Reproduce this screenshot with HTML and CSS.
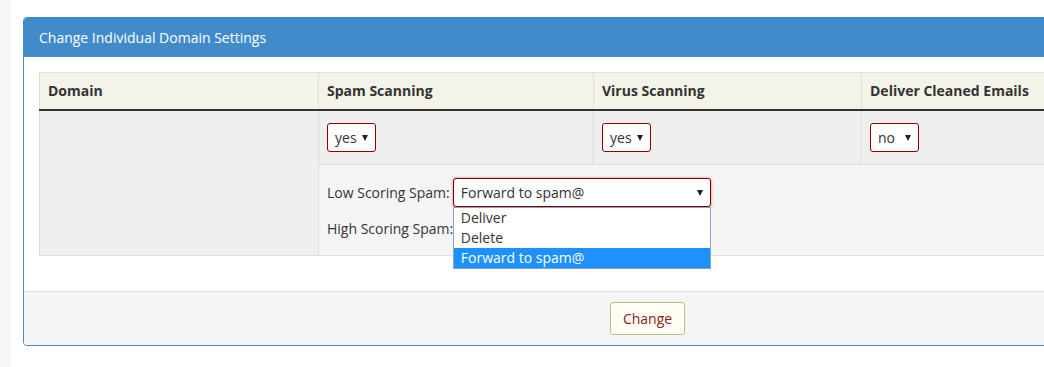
FILE: index.html
```html
<!DOCTYPE html>
<html>
<head>
<meta charset="utf-8">
<link rel="stylesheet" href="styles.css">
</head>
<body>
<div class="page">
  <aside class="rail"></aside>
  <main class="main">
    <section class="panel">
      <div class="panel-heading">Change Individual Domain Settings</div>
      <div class="panel-body">
        <table class="grid">
          <colgroup>
            <col class="c-domain"><col class="c-spam"><col class="c-virus"><col class="c-deliver">
          </colgroup>
          <thead>
            <tr>
              <th>Domain</th>
              <th>Spam Scanning</th>
              <th>Virus Scanning</th>
              <th>Deliver Cleaned Emails</th>
            </tr>
          </thead>
          <tbody>
            <tr class="row-main">
              <td class="domain" rowspan="2"></td>
              <td><div class="sel sel-small">yes<span class="caret"></span></div></td>
              <td><div class="sel sel-small">yes<span class="caret"></span></div></td>
              <td><div class="sel sel-small">no<span class="caret"></span></div></td>
            </tr>
            <tr class="row-sub">
              <td colspan="3">
                <div class="opt-line">
                  <span class="lbl">Low Scoring Spam:</span>
                  <div class="sel sel-low is-open">Forward to spam@<span class="caret"></span>
                    <ul class="dropdown">
                      <li>Deliver</li>
                      <li>Delete</li>
                      <li class="active">Forward to spam@</li>
                    </ul>
                  </div>
                </div>
                <div class="opt-line">
                  <span class="lbl">High Scoring Spam:</span>
                  <div class="sel sel-high">Delete<span class="caret"></span></div>
                </div>
              </td>
            </tr>
          </tbody>
        </table>
      </div>
      <div class="panel-footer">
        <button class="btn">Change</button>
      </div>
    </section>
  </main>
</div>
</body>
</html>
```
FILE: styles.css
```css
html, body {
  margin: 0;
  padding: 0;
  overflow: hidden;
  background: #fff;
}
body {
  font-family: "Open Sans", "Liberation Sans", sans-serif;
  font-size: 14px;
  color: #333;
}
.page {
  display: flex;
  width: 1300px;
  height: 367px;
}
.rail {
  width: 11px;
  flex: none;
  background: #f6f6f6;
}
.main {
  padding: 17px 0 0 12px;
}
.panel {
  width: 1247px;
  border: 1px solid #428bca;
  border-radius: 4px;
  overflow: hidden;
}
.panel-heading {
  background: #428bca;
  color: #fff;
  font-size: 14px;
  height: 39px;
  line-height: 40px;
  padding: 0 15px;
}
.panel-body {
  padding: 15px 15px 35px;
}
.grid {
  width: 100%;
  border-collapse: collapse;
  table-layout: fixed;
}
.c-domain { width: 279px; }
.c-spam { width: 275px; }
.c-virus { width: 268px; }
.grid th {
  background: #f4f3ea;
  text-align: left;
  font-weight: 700;
  font-size: 14px;
  padding: 8px 8px 8px;
  line-height: 20px;
  border: 1px solid #e2e1d8;
  border-bottom: 2px solid #333;
}
.grid td {
  vertical-align: top;
  border: 1px solid #dedede;
}
.row-main td {
  background: #efefef;
  padding: 12px 8px 12px;
  height: 29px;
}
.grid td.domain {
  background: #efefef;
}
.row-sub td {
  background: #f5f5f5;
  padding: 13px 8px 12px;
}
.opt-line {
  display: flex;
  align-items: center;
  height: 29px;
}
.opt-line + .opt-line {
  margin-top: 7px;
}
.lbl {
  margin-right: 3px;
}
.sel {
  position: relative;
  box-sizing: border-box;
  height: 29px;
  border: 1px solid #8b0000;
  border-radius: 3px;
  background: #fff;
  display: flex;
  align-items: center;
  padding: 0 7px;
  color: #333;
}
.sel-small {
  display: inline-flex;
  width: 49px;
}
.caret {
  position: absolute;
  right: 7px;
  top: 11px;
  width: 0;
  height: 0;
  border-left: 3px solid transparent;
  border-right: 3px solid transparent;
  border-top: 6px solid #222;
}
.sel-low {
  width: 258px;
  border-color: #7a0000;
  box-shadow: 0 0 3px rgba(220, 0, 0, 0.55);
}
.sel-high {
  width: 251px;
}
.dropdown {
  position: absolute;
  left: -1px;
  top: 28px;
  width: 258px;
  box-sizing: border-box;
  margin: 0;
  padding: 0;
  list-style: none;
  background: #fff;
  border: 1px solid #8aa4c8;
  z-index: 5;
}
.dropdown li {
  height: 20px;
  line-height: 20px;
  padding: 0 7px;
  color: #333;
}
.dropdown li.active {
  background: #1e90ff;
  color: #fff;
}
.panel-footer {
  background: #f5f5f5;
  border-top: 1px solid #ddd;
  padding: 10px 0 10px;
  display: flex;
  justify-content: center;
}
.btn {
  width: 75px;
  height: 33px;
  border: 1px solid #b8c27c;
  border-radius: 3px;
  background: #fffff6;
  color: #8b1a22;
  font-family: "Open Sans", "Liberation Sans", sans-serif;
  font-size: 14px;
  padding: 0;
}
```
